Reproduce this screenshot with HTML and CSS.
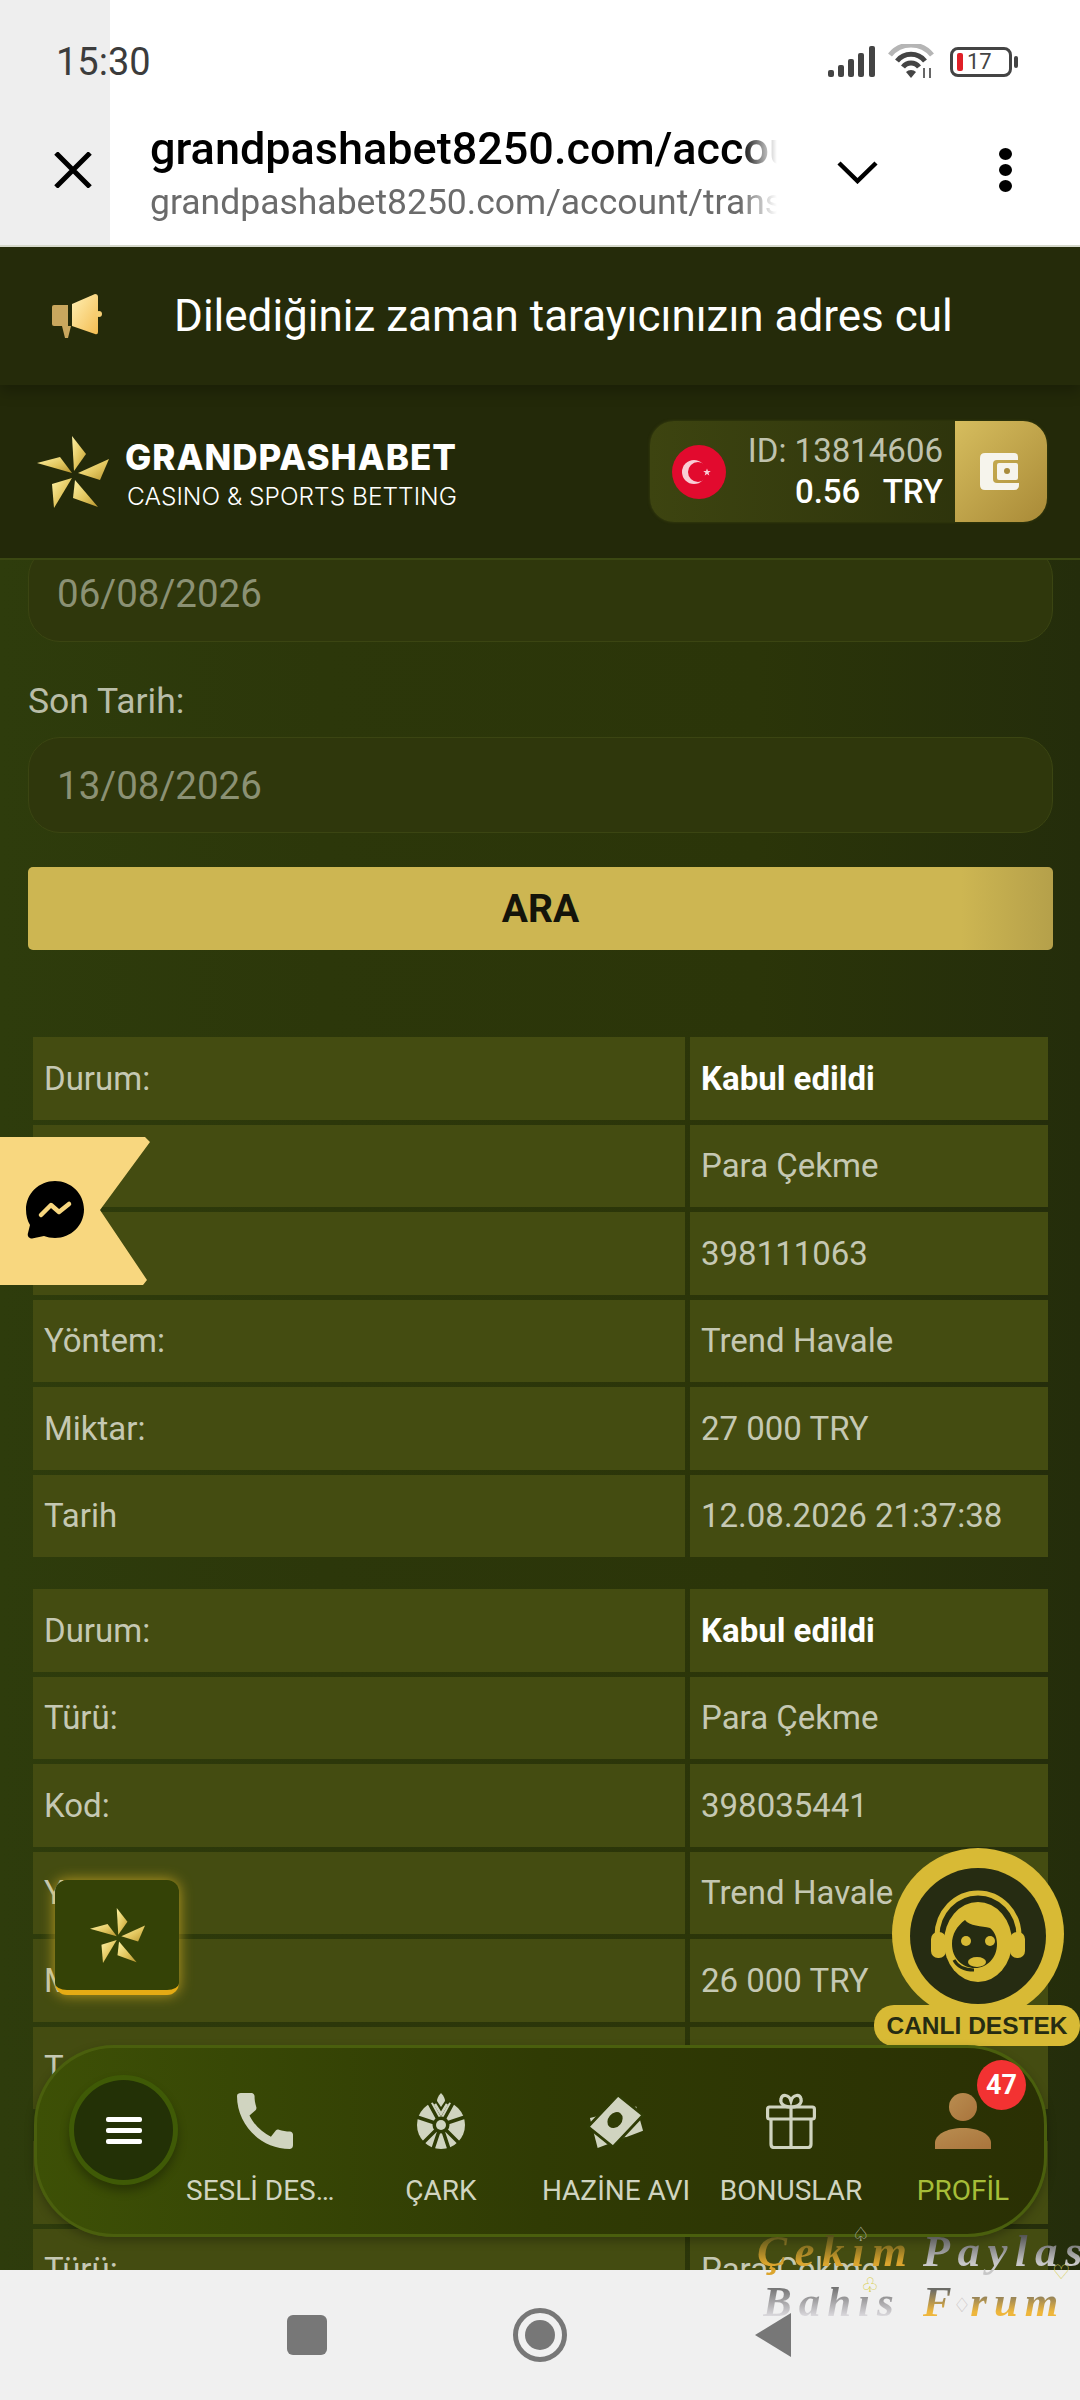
FILE: index.html
```html
<!DOCTYPE html>
<html lang="tr">
<head>
    <meta charset="UTF-8">
    <meta name="viewport" content="width=device-width, initial-scale=1.0">
    <title>Grandpashabet</title>
    <link rel="stylesheet" href="styles.css">
</head>
<body>

<svg class="defs" width="0" height="0">
    <defs>
        <linearGradient id="gold" x1="0" y1="0" x2="1" y2="1">
            <stop offset="0" stop-color="#fff3a6"/>
            <stop offset="0.55" stop-color="#e2c65e"/>
            <stop offset="1" stop-color="#b8962f"/>
        </linearGradient>
        <linearGradient id="speaker" x1="0" y1="0" x2="1" y2="1">
            <stop offset="0" stop-color="#fff0b4"/>
            <stop offset="1" stop-color="#f4bd52"/>
        </linearGradient>
        <linearGradient id="person" x1="0" y1="0" x2="1" y2="1">
            <stop offset="0" stop-color="#b98d50"/>
            <stop offset="1" stop-color="#a9743c"/>
        </linearGradient>
        <symbol id="star" viewBox="0 0 72 72">
            <polygon points="35,0 49,18 37,35"/>
            <polygon points="72,23 41,37 63,44"/>
            <polygon points="0,27 23,21 35,37"/>
            <polygon points="15,48 35,42 17,72"/>
            <polygon points="38,44 61,71 36,62"/>
        </symbol>
    </defs>
</svg>

<div class="screen">
    <!-- browser chrome -->
    <div class="chrome">
        <div class="status-bar">
            <span class="time">15:30</span>
            <div class="status-icons">
                <svg width="47" height="31" viewBox="0 0 47 31" fill="#444">
                    <rect x="0" y="24" width="6" height="7" rx="2"/>
                    <rect x="10" y="19" width="6" height="12" rx="2"/>
                    <rect x="20" y="13" width="6" height="18" rx="2"/>
                    <rect x="30" y="7" width="6" height="24" rx="2"/>
                    <rect x="41" y="0" width="6" height="31" rx="2"/>
                </svg>
                <svg width="46" height="35" viewBox="0 0 46 35" fill="none" stroke-width="5">
                    <path d="M2 11 A27 27 0 0 1 44 11" stroke="#b5b5b5"/>
                    <path d="M9 17 A18 18 0 0 1 37 17" stroke="#444"/>
                    <path d="M15 23 A10 10 0 0 1 31 23" stroke="#444"/>
                    <path d="M18 28 L23 34 L28 28 A7 7 0 0 0 18 28 Z" fill="#444" stroke="none"/>
                    <path d="M36 24 V34 M42 24 V34" stroke="#666" stroke-width="2"/>
                </svg>
                <div class="battery">
                    <span class="battery-level"></span>
                    <span class="battery-text">17</span>
                </div>
            </div>
        </div>
        <div class="toolbar">
            <svg class="close-icon" width="38" height="36" viewBox="0 0 38 36" fill="none" stroke="#000" stroke-width="5">
                <path d="M2 1 L36 35 M36 1 L2 35"/>
            </svg>
            <div class="address">
                <div class="address-title">grandpashabet8250.com/account/transactions</div>
                <div class="address-url">grandpashabet8250.com/account/transactions</div>
            </div>
            <svg class="chevron" width="41" height="23" viewBox="0 0 41 23" fill="none" stroke="#000" stroke-width="4.5">
                <path d="M2 2 L20.5 20 L39 2"/>
            </svg>
            <div class="kebab"><span></span><span></span><span></span></div>
        </div>
    </div>

    <div class="webview">
        <div class="marquee">
            <svg width="50" height="44" viewBox="0 0 50 44">
                <path d="M0 13 Q0 11 2 11 H16 V32 H2 Q0 32 0 30 Z" fill="#c9a75e"/>
                <path d="M10 32 H19 L16 44 H13 Z" fill="#c9a75e"/>
                <path d="M20 10 L43 0 Q46 0 46 3 V38 Q46 41 43 40 L20 32 Z" fill="url(#speaker)"/>
                <circle cx="47" cy="20" r="3" fill="#f6cf74"/>
            </svg>
            <span class="marquee-text">Dilediğiniz zaman tarayıcınızın adres cul</span>
        </div>

        <header class="site-header">
            <div class="logo">
                <svg class="logo-star" fill="url(#gold)"><use href="#star"/></svg>
                <div class="logo-text">
                    <div class="logo-name">GRANDPASHABET</div>
                    <div class="logo-sub">CASINO &amp; SPORTS BETTING</div>
                </div>
            </div>
            <div class="balance">
                <svg class="flag" width="54" height="54" viewBox="0 0 54 54">
                    <circle cx="27" cy="27" r="27" fill="#e20a2e"/>
                    <circle cx="22" cy="27" r="12" fill="#f9cdd6"/>
                    <circle cx="26" cy="27" r="10" fill="#e20a2e"/>
                    <polygon points="35,23.500 36,26 38.800,26 36.500,27.800 37.300,30.500 35,28.900 32.700,30.500 33.500,27.800 31.200,26 34,26" fill="#f9cdd6"/>
                </svg>
                <div class="balance-info">
                    <div class="balance-id">ID: 13814606</div>
                    <div class="balance-sum">0.56&nbsp;&nbsp;TRY</div>
                </div>
                <div class="balance-wallet">
                    <svg width="39" height="37" viewBox="0 0 39 37">
                        <path d="M5 0 H34 Q38 0 38 4 V7 H17 Q13 7 13 11 V26 Q13 30 17 30 H39 V32 Q39 37 34 37 H5 Q0 37 0 32 V5 Q0 0 5 0 Z" fill="#f6f4ec"/>
                        <rect x="17" y="10" width="21" height="17" rx="2" fill="#f6f4ec"/>
                        <circle cx="27" cy="18" r="3" fill="#a98c3d"/>
                    </svg>
                </div>
            </div>
        </header>

        <main class="content">
            <input class="date-input date-input-first" type="text" value="06/08/2026" readonly>
            <label class="date-label">Son Tarih:</label>
            <input class="date-input" type="text" value="13/08/2026" readonly>
            <button class="search-btn">ARA</button>

            <table class="tx-table tx-table-first">
                <tr><td>Durum:</td><td class="status">Kabul edildi</td></tr>
                <tr><td>Türü:</td><td>Para Çekme</td></tr>
                <tr><td>Kod:</td><td>398111063</td></tr>
                <tr><td>Yöntem:</td><td>Trend Havale</td></tr>
                <tr><td>Miktar:</td><td>27 000 TRY</td></tr>
                <tr><td>Tarih</td><td>12.08.2026 21:37:38</td></tr>
            </table>

            <table class="tx-table">
                <tr><td>Durum:</td><td class="status">Kabul edildi</td></tr>
                <tr><td>Türü:</td><td>Para Çekme</td></tr>
                <tr><td>Kod:</td><td>398035441</td></tr>
                <tr><td>Yöntem:</td><td>Trend Havale</td></tr>
                <tr><td>Miktar:</td><td>26 000 TRY</td></tr>
                <tr><td>Tarih</td><td></td></tr>
            </table>

            <table class="tx-table">
                <tr><td>Durum:</td><td class="status">Kabul edildi</td></tr>
                <tr><td>Türü:</td><td>Para Çekme</td></tr>
            </table>
        </main>

        <!-- floating things over the page -->
        <div class="messenger">
            <svg width="58" height="58" viewBox="0 0 58 58">
                <path d="M29 0 C45 0 58 12.500 58 28.500 C58 44.500 45 57 29 57 C25 57 21 56 18 55 L6 57.500 C3 57.500 1 55 2 52 L4 44 C1.500 40 0 34.500 0 28.500 C0 12.500 13 0 29 0 Z" fill="#000"/>
                <path d="M15 34 L25 24 L33 31 L43 23" fill="none" stroke="#f8d77f" stroke-width="4.500" stroke-linecap="round" stroke-linejoin="round"/>
            </svg>
        </div>

        <div class="star-btn">
            <svg class="star-btn-icon" fill="url(#gold)"><use href="#star"/></svg>
        </div>

        <div class="support">
            <svg class="support-face" width="172" height="172" viewBox="0 0 172 172">
                <circle cx="86" cy="86" r="86" fill="#d8ba35"/>
                <circle cx="86" cy="88" r="68" fill="#262c12"/>
                <path d="M45 88 A41 43 0 0 1 127 88" fill="none" stroke="#d8ba35" stroke-width="5"/>
                <ellipse cx="86" cy="94" rx="34" ry="40" fill="#d8ba35"/>
                <rect x="39" y="84" width="15" height="26" rx="7" fill="#d8ba35"/>
                <rect x="118" y="84" width="15" height="26" rx="7" fill="#d8ba35"/>
                <path d="M73 72 C77 78 90 78 98 80 C103 84 105 90 105 96 C105 110 95 120 83 120 C70 120 60 110 60 96 C60 86 65 78 73 72 Z" fill="#262c12"/>
                <circle cx="74" cy="93" r="5" fill="#d8ba35"/>
                <circle cx="98" cy="93" r="5" fill="#d8ba35"/>
                <path d="M62 112 C66 120 74 122 82 122" fill="none" stroke="#262c12" stroke-width="3"/>
                <ellipse cx="85" cy="114" rx="9" ry="5" fill="#d8ba35"/>
            </svg>
            <span class="support-label">CANLI DESTEK</span>
        </div>

        <nav class="bottom-nav">
            <button class="menu-btn"><span></span><span></span><span></span></button>
            <div class="nav-items">
                <div class="nav-item">
                    <svg class="phone-icon" width="56" height="56" viewBox="3 3 18 18" fill="#d0d4c0">
                        <path d="M20.010 15.380c-1.230 0-2.420-.2-3.530-.56-.35-.12-.74-.03-1.010.24l-1.570 1.970c-2.830-1.350-5.480-3.900-6.890-6.830l1.950-1.660c.27-.28.35-.67.24-1.020-.37-1.110-.56-2.300-.56-3.530 0-.54-.45-.99-.99-.99H4.190C3.650 3 3 3.240 3 3.990 3 13.280 10.730 21 20.010 21c.71 0 .99-.63.99-1.180v-3.450c0-.54-.45-.99-.99-.99z"/>
                    </svg>
                    <span class="nav-label">SESLİ DESTEK</span>
                </div>
                <div class="nav-item">
                    <svg width="56" height="56" viewBox="0 0 56 56">
                        <circle cx="28" cy="32" r="24" fill="#d0d4c0"/>
                        <g stroke="#2f3c05" stroke-width="3.500">
                            <path d="M28 32 L16 10 M28 32 L40 10 M28 32 L4 24 M28 32 L52 24 M28 32 L10 50 M28 32 L46 50 M28 32 L20 56 M28 32 L36 56"/>
                        </g>
                        <circle cx="28" cy="32" r="8.500" fill="#2f3c05"/>
                        <circle cx="28" cy="32" r="5" fill="#d0d4c0"/>
                        <path d="M19 8 L28 24 L37 8 Z" fill="#2f3c05"/>
                        <path d="M22 11 L28 21 L34 11" fill="none" stroke="#d0d4c0" stroke-width="2.500"/>
                        <path d="M28 0 C31 3 32 6 32 8 L28 14 L24 8 C24 6 25 3 28 0 Z" fill="#d0d4c0"/>
                    </svg>
                    <span class="nav-label">ÇARK</span>
                </div>
                <div class="nav-item">
                    <svg width="62" height="58" viewBox="0 0 62 58">
                        <polygon points="4,26 52,14 59,39 12,57" fill="#d0d4c0"/>
                        <polygon points="33,2 59,23 28,56 2,35" fill="#d0d4c0" stroke="#2f3c05" stroke-width="3"/>
                        <ellipse cx="30" cy="28" rx="7" ry="9" transform="rotate(40 30 28)" fill="#2f3c05"/>
                        <path d="M12 36 L17 41 M46 19 L51 24" transform="rotate(90 30 30)" stroke="#2f3c05" stroke-width="2"/>
                    </svg>
                    <span class="nav-label">HAZİNE AVI</span>
                </div>
                <div class="nav-item">
                    <svg width="50" height="56" viewBox="0 0 50 56" fill="none" stroke="#d0d4c0" stroke-width="3.200">
                        <rect x="1.600" y="14" width="46.800" height="12" rx="2"/>
                        <path d="M5 26 V51 Q5 54.500 8 54.500 H42 Q45 54.500 45 51 V26"/>
                        <path d="M25 14 V54"/>
                        <path d="M25 14 C17 14 14 10 15 6 C16 1 23 1 25 8 C27 1 34 1 35 6 C36 10 33 14 25 14 Z"/>
                    </svg>
                    <span class="nav-label">BONUSLAR</span>
                </div>
                <div class="nav-item nav-item-active">
                    <svg width="58" height="56" viewBox="0 0 58 56" fill="url(#person)">
                        <ellipse cx="29" cy="14" rx="14" ry="14"/>
                        <path d="M1 56 V50 C1 42 12 35 29 35 C46 35 57 42 57 50 V56 Z"/>
                    </svg>
                    <span class="nav-label">PROFİL</span>
                    <span class="nav-badge">47</span>
                </div>
            </div>
        </nav>
    </div>

    <!-- android buttons -->
    <div class="system-nav">
        <span class="sys-square"></span>
        <span class="sys-circle"></span>
        <svg class="sys-back" width="36" height="44" viewBox="0 0 36 44"><path d="M36 0 V44 L0 22 Z" fill="#777"/></svg>
    </div>

    <div class="watermark">
        <div class="watermark-line">
            <span class="wm-orange">Çekım</span>
            <span class="wm-gray">Paylas</span>
            <i class="wm-suit wm-spade">♤</i>
            <i class="wm-suit wm-heart">♡</i>
        </div>
        <div class="watermark-line watermark-line-two">
            <span class="wm-silver">Bahıs</span>
            <span class="wm-gold">F&nbsp;rum</span>
            <i class="wm-suit wm-club">♧</i>
            <i class="wm-suit wm-diamond">♢</i>
        </div>
    </div>
</div>

</body>
</html>
```

FILE: styles.css
```css
* {
    box-sizing: border-box;
}
body {
    margin: 0;
    font-family: Roboto, "Liberation Sans", sans-serif;
}
.defs {
    position: absolute;
}
.screen {
    position: relative;
    width: 1080px;
    height: 2400px;
    display: flex;
    flex-direction: column;
    overflow: hidden;
}

/* Browser chrome */
.chrome {
    height: 247px;
    background: linear-gradient(to right, #eeeeee 110px, #ffffff 110px);
    border-bottom: 2px solid #d6d9cc;
}
.status-bar {
    height: 122px;
    padding: 40px 61px 0 56px;
    display: flex;
    justify-content: space-between;
    align-items: flex-start;
}
.time {
    font-size: 38px;
    line-height: 44px;
    color: #3c3c3c;
}
.status-icons {
    display: flex;
    align-items: center;
    gap: 13px;
    margin-top: 4px;
}
.battery {
    position: relative;
    width: 62px;
    height: 30px;
    border: 3px solid #444;
    border-radius: 8px;
    margin-left: 3px;
    margin-right: 7px;
    display: flex;
    align-items: center;
    padding-left: 4px;
    gap: 4px;
}
.battery::after {
    content: "";
    position: absolute;
    right: -9px;
    top: 6px;
    width: 4px;
    height: 12px;
    background: #444;
    border-radius: 2px;
}
.battery-level {
    width: 6px;
    height: 18px;
    background: #e01f26;
    border-radius: 2px;
}
.battery-text {
    font-size: 22px;
    color: #444;
}
.toolbar {
    height: 123px;
    display: flex;
    align-items: flex-start;
    padding-left: 54px;
}
.close-icon {
    margin-top: 30px;
}
.address {
    width: 627px;
    margin-left: 58px;
    overflow: hidden;
    white-space: nowrap;
    -webkit-mask-image: linear-gradient(to right, #000 590px, transparent 627px);
    mask-image: linear-gradient(to right, #000 590px, transparent 627px);
}
.address-title {
    font-size: 45px;
    line-height: 53px;
    font-weight: 500;
    color: #000;
}
.address-url {
    font-size: 35.500px;
    line-height: 54px;
    color: #6b6b6b;
}
.chevron {
    margin-left: 60px;
    margin-top: 39px;
}
.kebab {
    margin-left: 121px;
    margin-top: 26px;
    display: flex;
    flex-direction: column;
    gap: 4px;
}
.kebab span {
    width: 13px;
    height: 12px;
    border-radius: 50%;
    background: #000;
}

/* Page */
.webview {
    position: relative;
    flex: 1;
    display: flex;
    flex-direction: column;
    overflow: hidden;
    background: linear-gradient(to right, #2e3c0c, #2c370a 30%, #2b3509 70%, #242d0b);
}
.marquee {
    height: 138px;
    flex-shrink: 0;
    background: #252b0a;
    display: flex;
    align-items: center;
    padding-left: 52px;
    gap: 72px;
    color: #fff;
    box-shadow: 0 6px 14px rgba(0, 0, 0, 0.25);
    position: relative;
}
.marquee-text {
    font-size: 44px;
    line-height: 50px;
    white-space: nowrap;
}
.site-header {
    height: 173px;
    flex-shrink: 0;
    background: #232909;
    display: flex;
    justify-content: space-between;
    align-items: center;
    padding: 0 33px 0 37px;
}
.logo {
    display: flex;
    align-items: center;
    gap: 16px;
    color: #fff;
}
.logo-star {
    width: 72px;
    height: 72px;
}
.logo-text {
    padding-top: 7px;
}
.logo-name {
    font-family: Inter, "Liberation Sans", sans-serif;
    font-size: 35px;
    line-height: 38px;
    font-weight: 800;
    letter-spacing: 1px;
}
.logo-sub {
    font-family: Inter, "Liberation Sans", sans-serif;
    font-size: 24.500px;
    line-height: 32px;
    font-weight: 300;
    margin: 4px 0 0 2px;
}
.balance {
    width: 397px;
    height: 101px;
    border-radius: 24px;
    background: linear-gradient(to right, #3d4410, #2a300b);
    display: flex;
    align-items: center;
    overflow: hidden;
    padding-left: 22px;
    box-shadow: 0 0 3px #3d4410;
}
.balance-info {
    flex: 1;
    text-align: right;
    padding-right: 12px;
}
.balance-id {
    font-size: 33px;
    line-height: 40px;
    color: #bfc2ad;
}
.balance-sum {
    font-size: 33px;
    line-height: 42px;
    font-weight: 500;
    word-spacing: 3px;
    color: #fff;
}
.balance-wallet {
    width: 92px;
    height: 100%;
    flex-shrink: 0;
    background: linear-gradient(135deg, #d6bd5e, #a98a37);
    display: flex;
    align-items: center;
    justify-content: center;
    padding-right: 4px;
}

.content {
    flex: 1;
    overflow: hidden;
    padding: 0 27px 0 28px;
    border-top: 2px solid #3b4812;
}
.date-input {
    display: block;
    width: 100%;
    height: 96px;
    padding: 0 28px;
    border: 1px solid #3b4512;
    border-radius: 32px;
    background: #2f370c;
    font-family: Roboto, sans-serif;
    font-size: 38.500px;
    color: #8b9174;
    outline: none;
}
.date-input-first {
    margin-top: -15px;
    height: 97px;
}
.date-label {
    display: block;
    padding: 39px 0 16px;
    font-size: 35.500px;
    line-height: 40px;
    color: #b9bda8;
}
.search-btn {
    display: block;
    width: 100%;
    height: 83px;
    margin-top: 34px;
    border: 0;
    border-radius: 5px;
    background: linear-gradient(to right, #cdb652 0%, #cdb652 91%, #b5a04a 100%);
    font-family: Roboto, sans-serif;
    font-size: 39px;
    font-weight: 700;
    color: #14140a;
}
.tx-table {
    width: 100%;
    border-collapse: separate;
    border-spacing: 5px;
    table-layout: fixed;
    margin-top: 22px;
}
.tx-table-first {
    margin-top: 82px;
}
.tx-table td {
    height: 82.500px;
    padding: 0 11px;
    background: #444c11;
    font-size: 33px;
    color: #c5c8b3;
    white-space: nowrap;
}
.tx-table td:first-child {
    width: 652px;
}
.tx-table .status {
    font-weight: 700;
    color: #fff;
}

/* Floating buttons */
.messenger {
    position: absolute;
    left: 0;
    top: 890px;
    width: 150px;
    height: 148px;
    padding: 44px 0 0 26px;
    background: #f8d77f;
    clip-path: polygon(0 0, 145px 0, 150px 5px, 100px 73px, 147px 143px, 143px 148px, 0 148px);
}
.star-btn {
    position: absolute;
    left: 55px;
    top: 1633px;
    width: 124px;
    height: 115px;
    border-radius: 12px;
    background: #344206;
    border-bottom: 5px solid #e5ab14;
    box-shadow: 0 0 14px rgba(236, 190, 40, 0.7);
    display: flex;
    align-items: center;
    justify-content: center;
}
.star-btn-icon {
    width: 55px;
    height: 55px;
}
.support {
    position: absolute;
    left: 874px;
    top: 1601px;
    width: 206px;
    height: 198px;
}
.support-face {
    display: block;
    margin-left: 18px;
}
.support-label {
    position: absolute;
    left: 0;
    bottom: 0;
    width: 206px;
    height: 41px;
    border-radius: 20px;
    background: #d8ba35;
    font-family: "Liberation Sans", sans-serif;
    font-size: 24.500px;
    line-height: 41px;
    font-weight: 700;
    text-align: center;
    color: #262c12;
}

.bottom-nav {
    position: absolute;
    left: 34px;
    top: 1798px;
    width: 1013px;
    height: 192px;
    border-radius: 80px;
    border: 3px solid #4a5f0d;
    background: linear-gradient(to right, #3d5006, #303b04 50%, #2a3004);
    display: flex;
    box-shadow: 0 4px 10px rgba(0, 0, 0, 0.25);
}
.menu-btn {
    width: 109px;
    height: 110px;
    margin: 27px 0 0 32px;
    flex-shrink: 0;
    padding: 0;
    border: 5px solid #3f5a06;
    border-radius: 50%;
    background: #233106;
    display: flex;
    flex-direction: column;
    align-items: center;
    justify-content: center;
    gap: 6px;
    box-shadow: 0 6px 10px rgba(0, 0, 0, 0.3);
}
.menu-btn span {
    width: 36px;
    height: 5px;
    border-radius: 2px;
    background: #fff;
}
.nav-items {
    display: grid;
    grid-template-columns: 190px 170px 180px 170px 174px;
    margin-left: -12px;
}
.nav-item {
    position: relative;
    display: flex;
    flex-direction: column;
    align-items: center;
    padding-top: 45px;
}
.nav-item svg {
    height: 56px;
    flex-shrink: 0;
}
.nav-item .phone-icon {
    margin-left: 8px;
}
.nav-label {
    margin-top: 25px;
    max-width: 150px;
    overflow: hidden;
    text-overflow: ellipsis;
    white-space: nowrap;
    font-size: 28px;
    line-height: 34px;
    color: #d0d4c0;
}
.nav-item-active .nav-label {
    color: #a6bd38;
}
.nav-badge {
    position: absolute;
    left: 101px;
    top: 12px;
    width: 49px;
    height: 50px;
    border-radius: 50%;
    background: #f33232;
    color: #fff;
    font-size: 27px;
    font-weight: 700;
    line-height: 50px;
    text-align: center;
}

/* System buttons */
.system-nav {
    height: 130px;
    flex-shrink: 0;
    background: #f0f0f0;
    display: flex;
    align-items: center;
    justify-content: center;
    gap: 186px;
    padding-right: 3px;
}
.sys-square {
    width: 40px;
    height: 40px;
    border-radius: 6px;
    background: #777;
}
.sys-circle {
    width: 54px;
    height: 54px;
    border-radius: 50%;
    border: 5px solid #777;
    display: flex;
    align-items: center;
    justify-content: center;
}
.sys-circle::after {
    content: "";
    width: 30px;
    height: 30px;
    border-radius: 50%;
    background: #777;
}
.sys-back {
    margin-left: 2px;
}

/* Forum watermark */
.watermark {
    position: absolute;
    left: 757px;
    top: 2226px;
    width: 323px;
    font-family: "Liberation Serif", serif;
    font-style: italic;
    font-weight: 700;
    font-size: 45px;
    line-height: 50px;
}
.watermark-line {
    position: relative;
    display: flex;
    letter-spacing: 7.500px;
    white-space: nowrap;
    gap: 8px;
}
.watermark-line-two {
    margin-top: 1px;
    margin-left: 6px;
    gap: 22px;
    font-size: 43px;
    letter-spacing: 7px;
}
.watermark span {
    -webkit-background-clip: text;
    background-clip: text;
    color: transparent;
}
.wm-orange {
    background-image: linear-gradient(#4b4b18 15%, #dba52e 75%);
}
.wm-gray {
    background-image: linear-gradient(#4d4d4d 15%, #c8c8c8 75%);
}
.wm-silver {
    background-image: linear-gradient(#707070 20%, #dedce0 80%);
}
.wm-gold {
    background-image: linear-gradient(#6b6b66 25%, #eeb63c 70%);
    word-spacing: -6px;
}
.wm-suit {
    position: absolute;
    font-family: "DejaVu Sans", sans-serif;
    font-style: normal;
    font-weight: 400;
    font-size: 20px;
    line-height: 20px;
    letter-spacing: 0;
}
.wm-spade {
    left: 95px;
    top: -2px;
    color: #a9ad9a;
}
.wm-heart {
    left: 295px;
    top: 36px;
    color: #d7d066;
}
.wm-club {
    left: 98px;
    top: -2px;
    color: #d8ce4a;
}
.wm-diamond {
    left: 190px;
    top: 18px;
    color: #c9c3c3;
}
```
